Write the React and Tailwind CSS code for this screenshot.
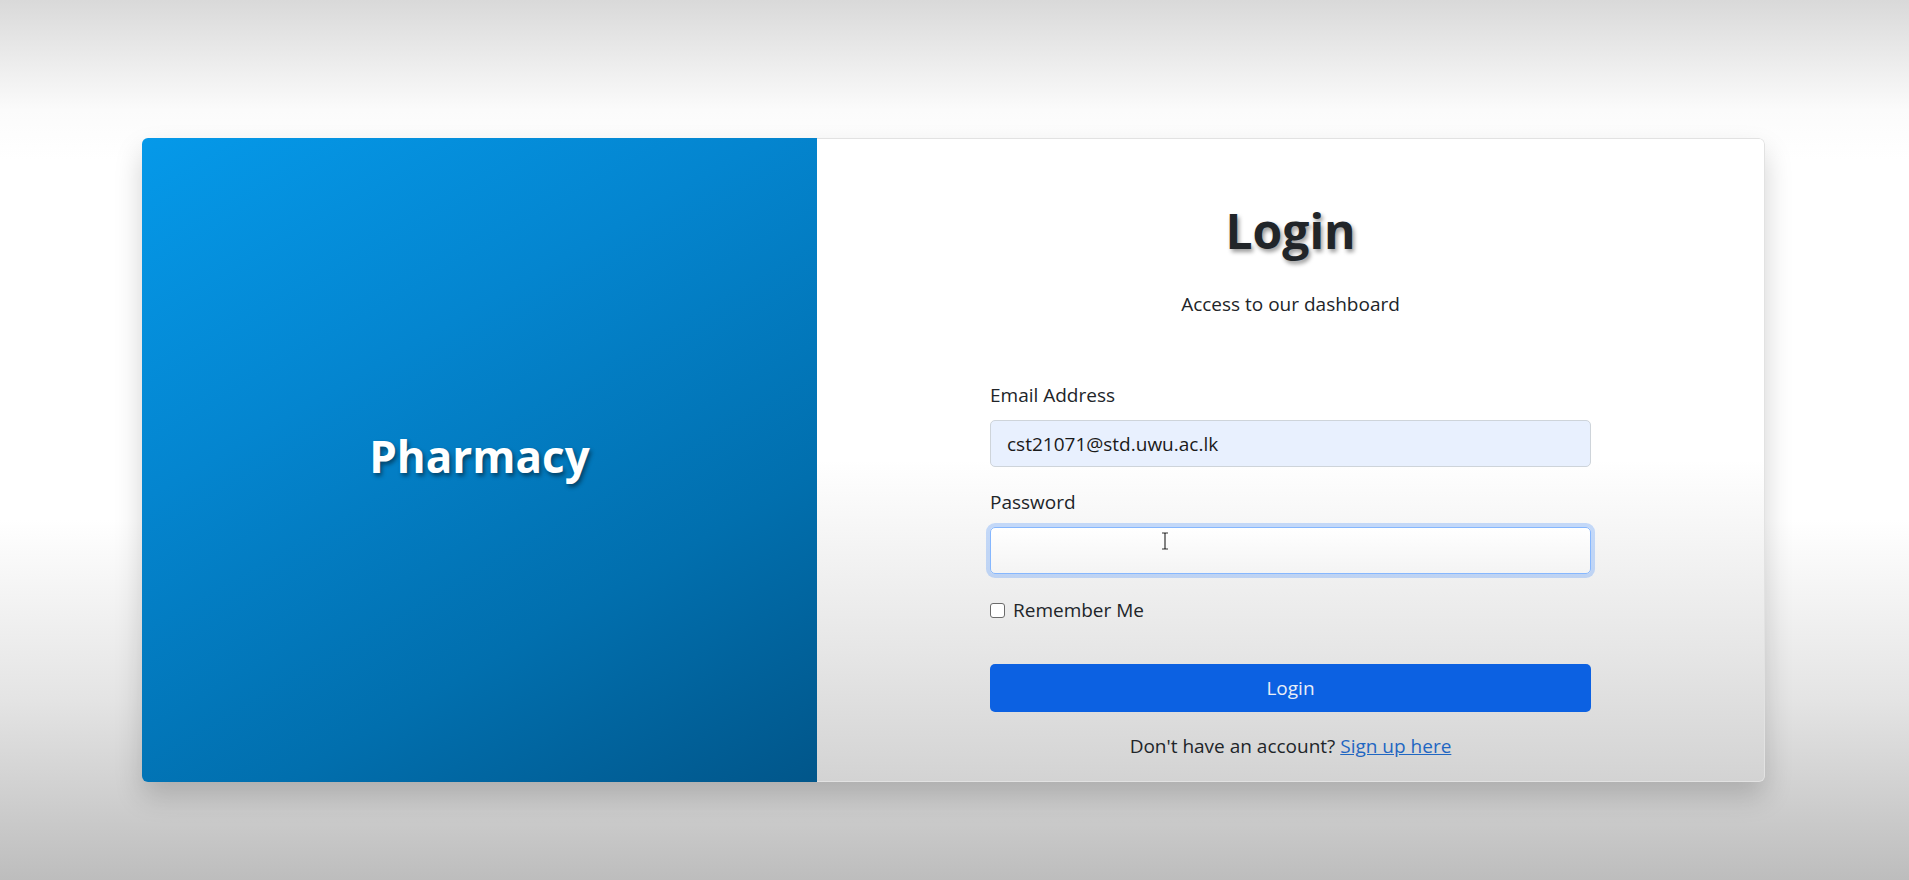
import { useState } from "react";

const FONT = { fontFamily: '"Open Sans", "Noto Sans", "Liberation Sans", sans-serif' };

function IBeam() {
  return (
    <svg width="10" height="18" viewBox="0 0 10 18" className="absolute left-[170px] top-[5px]">
      <path d="M2 1h2.5L5 2l.5-1H8M5 2v14M2 17h2.5L5 16l.5 1H8" fill="none" stroke="#333" strokeWidth="1.2" />
    </svg>
  );
}

export default function App() {
  const [email, setEmail] = useState("cst21071@std.uwu.ac.lk");
  const [password, setPassword] = useState("");
  const [remember, setRemember] = useState(false);

  return (
    <main
      className="min-h-[880px] w-full bg-[linear-gradient(180deg,#d9d9d9_0px,#fbfbfb_110px,#ffffff_160px,#ffffff_520px,#e4e4e4_700px,#bdbdbd_880px)] pt-[138px]"
      style={FONT}
    >
      <div className="mx-auto flex h-[644px] w-[1623px] -translate-x-[1px] overflow-hidden rounded-md shadow-[0_14px_28px_rgba(0,0,0,0.18)]">
        {/* left brand panel */}
        <div className="flex w-[675px] items-center justify-center bg-[linear-gradient(150deg,#0599e9_0%,#0485cf_35%,#016fae_70%,#01568a_100%)] pb-[8px]">
          <h1 className="text-[44px] font-bold leading-none text-white [text-shadow:2px_3px_4px_rgba(0,0,0,0.45)]">
            Pharmacy
          </h1>
        </div>

        {/* right form panel */}
        <div className="flex flex-1 flex-col items-center rounded-r-md border border-l-0 border-[#e2e2e2] bg-[linear-gradient(180deg,#ffffff_0%,#ffffff_50%,#e6e6e6_80%,#d3d3d3_100%)] pt-[62px]">
          <h2 className="text-[48px] font-bold leading-[60px] text-[#212529] [text-shadow:2px_3px_4px_rgba(0,0,0,0.4)]">
            Login
          </h2>
          <p className="mt-[29px] text-[19px] leading-[29px] text-[#212529]">Access to our dashboard</p>

          <form className="mt-[62px] w-[601px] text-[19px] text-[#212529]" onSubmit={(e) => e.preventDefault()}>
            <label className="block leading-[29px]">Email Address</label>
            <input
              type="email"
              value={email}
              onChange={(e) => setEmail(e.target.value)}
              className="mt-[10px] block h-[47px] w-full rounded-[5px] border border-[#ced4da] bg-[#e8f0fe] px-[16px] text-[19px] text-[#1a1a1a] outline-none"
            />

            <label className="mt-[21px] block leading-[29px]">Password</label>
            <div className="relative mt-[10px] h-[47px] w-full rounded-[5px] shadow-[0_0_0_4px_rgba(13,110,253,0.22)]">
              <input
                type="password"
                value={password}
                onChange={(e) => setPassword(e.target.value)}
                className="block h-full w-full rounded-[5px] border border-[#86b7fe] bg-[linear-gradient(180deg,#ffffff,#f4f4f4)] px-[16px] text-[19px] outline-none"
              />
              <IBeam />
            </div>

            <label className="mt-[22px] flex items-center gap-[8px] leading-[29px]">
              <input
                type="checkbox"
                checked={remember}
                onChange={(e) => setRemember(e.target.checked)}
                className="h-[15px] w-[15px] appearance-none rounded-[3px] border border-[#6b6b6b] bg-white"
              />
              Remember Me
            </label>

            <button
              type="submit"
              className="mt-[39px] block h-[48px] w-full rounded-[5px] bg-[#0c61e2] text-[19px] text-[#e9eef7]"
            >
              Login
            </button>

            <p className="mt-[20px] text-center leading-[29px]">
              Don't have an account?{" "}
              <a href="#" className="text-[#1f66c2] underline">
                Sign up here
              </a>
            </p>
          </form>
        </div>
      </div>
    </main>
  );
}
